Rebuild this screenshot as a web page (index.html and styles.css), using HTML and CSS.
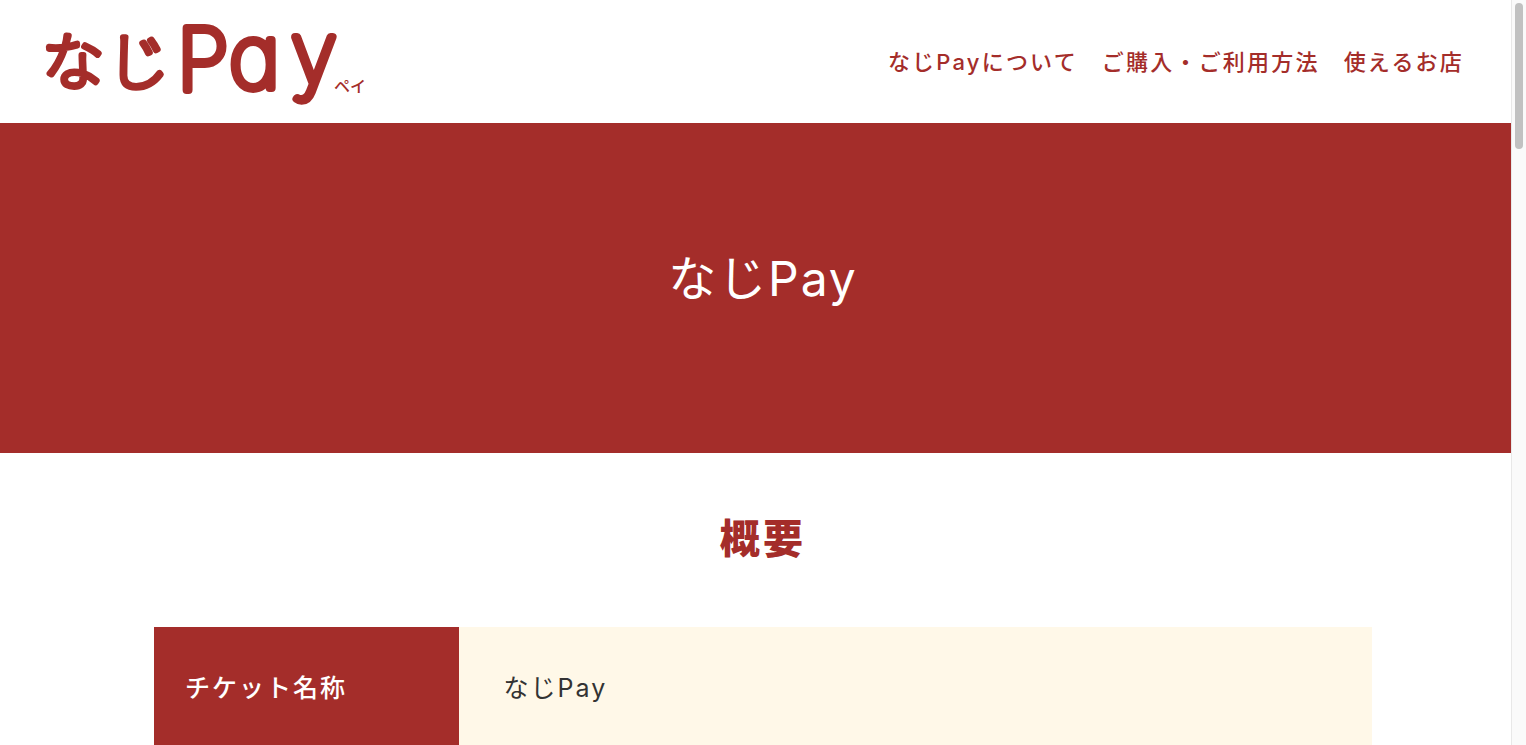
FILE: index.html
```html
<!DOCTYPE html>
<html lang="ja">
<head>
<meta charset="utf-8">
<meta name="viewport" content="width=device-width, initial-scale=1">
<title>なじPay</title>
<link rel="stylesheet" href="styles.css">
</head>
<body>
<header class="header">
  <a class="logo" href="#">
    <svg class="logo-art" viewBox="0 0 328 90" role="img" aria-label="なじPay ペイ">
      <text class="logo-kana" x="2" y="68" font-size="62">な</text>
      <text class="logo-kana" x="67" y="68" font-size="62">じ</text>
      <text class="logo-latin" x="137" y="73" font-size="85">P</text>
      <text class="logo-latin" x="189" y="71" font-size="88">a</text>
      <text class="logo-latin" x="251" y="66" font-size="84">y</text>
      <text class="logo-ruby" x="294" y="75" font-size="16">ペイ</text>
    </svg>
  </a>
  <nav class="nav">
    <a href="#about">なじPayについて</a>
    <a href="#usage">ご購入・ご利用方法</a>
    <a href="#shops">使えるお店</a>
  </nav>
</header>
<main>
  <section class="hero" id="about">
    <h1 class="hero-title">なじPay</h1>
  </section>
  <section class="overview">
    <h2 class="overview-title">概要</h2>
    <table class="details">
      <tbody>
        <tr><th scope="row">チケット名称</th><td>なじPay</td></tr>
      </tbody>
    </table>
  </section>
</main>
<div class="scrollbar" aria-hidden="true"><div class="scrollbar-thumb"></div></div>
</body>
</html>
```
FILE: styles.css
```css
* { box-sizing: border-box; }
html { scrollbar-width: none; }
body {
  margin: 0;
  background: #fff;
  color: #333;
  font-family: Inter, "Noto Sans CJK JP", sans-serif;
}
.header {
  display: flex;
  align-items: center;
  justify-content: space-between;
  padding: 17px 62px 16px 40px;
}
.logo { display: block; }
.logo-art {
  display: block;
  width: 328px;
  height: 90px;
  overflow: visible;
  fill: #a42d2a;
  stroke: #a42d2a;
  stroke-linejoin: round;
}
.logo-kana { font-family: "Noto Sans CJK JP", sans-serif; font-weight: 100; stroke-width: 6px; }
.logo-latin { font-family: Inter, sans-serif; font-weight: 100; stroke-width: 8px; font-feature-settings: "cv11"; }
.logo-ruby { font-family: "Noto Sans CJK JP", sans-serif; font-weight: 500; stroke-width: 0; }
.nav { display: flex; gap: 24px; }
.nav a {
  color: #a42d2a;
  font-size: 22px;
  font-weight: 500;
  line-height: 34px;
  letter-spacing: 0.1em;
  text-decoration: none;
  white-space: nowrap;
}
.hero {
  padding: 120px 24px 138px;
  background: #a42d2a;
  color: #fff;
  text-align: center;
}
.hero-title {
  margin: 0;
  font-size: 48px;
  font-weight: 400;
  line-height: 72px;
  letter-spacing: 0.04em;
}
.overview { padding: 56px 154px 0; }
.overview-title {
  margin: 0 0 58px;
  color: #a42d2a;
  font-size: 40px;
  font-weight: 900;
  line-height: 60px;
  letter-spacing: 0.08em;
  text-align: center;
}
.details {
  width: 100%;
  border-collapse: collapse;
  table-layout: fixed;
  font-size: 25px;
  line-height: 42px;
  letter-spacing: 0.08em;
  text-align: left;
}
.details th {
  width: 25%;
  padding: 40px 31px;
  background: #a42d2a;
  color: #fff;
  font-weight: 500;
}
.details td { padding: 40px 45px; background: #fff8e8; }
.scrollbar {
  position: fixed;
  top: 0;
  right: 0;
  bottom: 0;
  width: 15px;
  padding: 3px;
  border-left: 1px solid #e8e8e8;
  background: #fafafa;
}
.scrollbar-thumb { width: 8px; height: 146px; border-radius: 4px; background: #c1c1c1; }
```
